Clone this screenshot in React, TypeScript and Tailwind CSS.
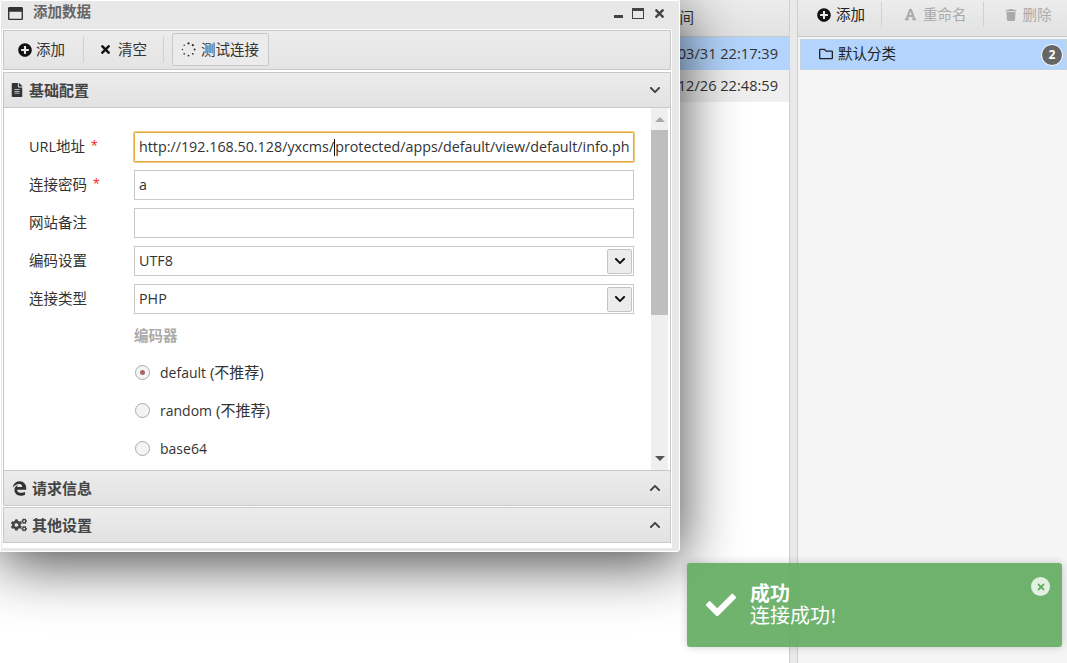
import type { ReactNode } from "react";
import { FaChevronDown, FaChevronUp, FaCogs, FaEdgeLegacy, FaFileAlt, FaFont, FaPlusCircle, FaRegFolder, FaRegWindowMaximize, FaTimes, FaTrash, FaCheck } from "react-icons/fa";

const FONT = "font-['Open_Sans','Noto_Sans_CJK_SC',sans-serif]";

const Spinner = () => (
    <svg viewBox="0 0 16 16" className="w-[15px] h-[15px] text-[#333]" fill="currentColor">
        <circle cx="8" cy="1.5" r="1.2" />
        <circle cx="12.6" cy="3.4" r="1.2" />
        <circle cx="14.5" cy="8" r="1.1" />
        <circle cx="12.6" cy="12.6" r="1" />
        <circle cx="8" cy="14.5" r="1" />
        <circle cx="3.4" cy="12.6" r="0.9" />
        <circle cx="1.5" cy="8" r="0.8" />
        <circle cx="3.4" cy="3.4" r="0.8" />
    </svg>
);

const FormRow = ({ label, required, value, focused, select }: { label: string; required?: boolean; value?: ReactNode; focused?: boolean; select?: boolean }) => (
    <div className="flex items-center h-[30px]">
        <div className="w-[105px] pb-[1px] text-[14.5px] text-[#333] flex items-center whitespace-nowrap">
            {label}
            {required && <span className="text-[#f33] ml-[6px] text-[17px] leading-none font-['Liberation_Sans']">*</span>}
        </div>
        <div
            className={`w-[500px] h-[30px] bg-white flex items-center justify-between pl-[4px] pr-[1px] text-[14.3px] text-[#333] overflow-hidden whitespace-nowrap border ${
                focused ? "border-[#e5a83b] outline outline-1 outline-[#e5a83b]/60 rounded-[1px]" : "border-[#c8c8c8]"
            }`}
        >
            <span className="flex items-center">{value}</span>
            {select && (
                <span className="w-[25px] h-[25px] bg-[#ececec] border border-[#c4c4c4] rounded-[2px] flex items-center justify-center">
                    <FaChevronDown className="text-[12px] text-[#111]" />
                </span>
            )}
        </div>
    </div>
);

const Radio = ({ label, note, checked }: { label: string; note?: string; checked?: boolean }) => (
    <div className="flex items-center gap-[10px] h-[20px] pl-[1px] text-[14px] text-[#333]">
        <span className="w-[15px] h-[15px] rounded-full border border-[#aaa] bg-[#f4f4f4] flex items-center justify-center">
            {checked && <span className="w-[5px] h-[5px] rounded-full bg-[#a56565]" />}
        </span>
        <span>
            {label}
            {note && <span className="text-[15px]"> {note}</span>}
        </span>
    </div>
);

const PanelHeader = ({ icon, title, open, gap }: { icon: ReactNode; title: string; open?: boolean; gap: string }) => (
    <div className="h-[36px] shrink-0 flex items-center justify-between pl-[6px] pr-[9px] bg-gradient-to-b from-[#ececec] to-[#e2e2e2] border border-[#c8c8c8]">
        <div className={`flex items-center text-[15px] font-bold text-[#444] ${gap}`}>
            {icon}
            {title}
        </div>
        {open ? <FaChevronDown className="text-[12px] text-[#444]" /> : <FaChevronUp className="text-[12px] text-[#444]" />}
    </div>
);

const Modal = () => (
    <div className="absolute left-0 top-0 w-[680px] h-[552px] bg-[#e8e8e8] border border-white rounded-br-[3px] shadow-[0_10px_60px_rgba(0,0,0,0.75)] flex flex-col">
        <div className="h-[29px] shrink-0 flex items-start justify-between pl-[7px] pr-[13px] relative">
            <div className="flex items-start gap-[10px] text-[14.5px] font-bold text-[#666]">
                <FaRegWindowMaximize className="text-[15px] text-[#333] mt-[5px]" />
                <span className="leading-[22px]">添加数据</span>
            </div>
            <div className="flex items-start gap-[9px] text-[#444] pt-[6px]">
                <span className="w-[9px] h-[3px] bg-[#444] mt-[8px]" />
                <span className="w-[12px] h-[11px] border border-[#444] border-t-[3px] mt-[1px]" />
                <FaTimes className="text-[13px]" />
            </div>
        </div>
        <div className="ml-[2px] mr-[8px] flex-1 flex flex-col bg-white gap-[2px] p-0 outline outline-1 outline-white">
            <div className="h-[40px] shrink-0 flex items-center px-[5px] pb-[1px] bg-gradient-to-b from-[#ececec] to-[#e4e4e4] border border-[#c8c8c8] text-[14.5px] text-[#333]">
                <div className="flex items-center gap-[4px] px-[9px] font-normal">
                    <FaPlusCircle className="text-[14px] text-[#111]" />
                    添加
                </div>
                <span className="w-px h-[25px] bg-[#d0d0d0] ml-[9px] mr-[6px]" />
                <div className="flex items-center gap-[6px] px-[9px]">
                    <FaTimes className="text-[13px] text-[#111]" />
                    清空
                </div>
                <span className="w-px h-[25px] bg-[#d0d0d0] ml-[7px] mr-[8px]" />
                <div className="h-[33px] flex items-center gap-[5px] px-[8px] bg-[#ebebeb] border border-[#c8c8c8] rounded-[2px]">
                    <Spinner />
                    <span className="pr-[1px]">测试连接</span>
                </div>
            </div>
            <div className="flex-1 flex flex-col">
                <PanelHeader icon={<FaFileAlt className="text-[14px] text-[#333]" />} title="基础配置" gap="gap-[5px]" open />
                <div className="h-[362px] shrink-0 flex border-x border-[#c8c8c8]">
                    <div className="flex-1 pt-[24px] pl-[25px] flex flex-col gap-[8px] overflow-hidden">
                        <FormRow
                            label="URL地址"
                            required
                            focused
                            value={
                                <>
                                    http://192.168.50.128/yxcms/
                                    <span className="w-px h-[17px] bg-[#111]" />
                                    protected/apps/default/view/default/info.ph
                                </>
                            }
                        />
                        <FormRow label="连接密码" required value="a" />
                        <FormRow label="网站备注" />
                        <FormRow label="编码设置" value="UTF8" select />
                        <FormRow label="连接类型" value="PHP" select />
                        <div className="pl-[105px] pt-[3px] flex flex-col gap-[18px]">
                            <div className="text-[14.5px] font-bold text-[#aaa] h-[20px] mb-[-1px]">编码器</div>
                            <Radio label="default" note="(不推荐)" checked />
                            <Radio label="random" note="(不推荐)" />
                            <Radio label="base64" />
                        </div>
                    </div>
                    <div className="w-[17px] mr-[2px] bg-[#efefef] flex flex-col items-center">
                        <span className="h-[22px] flex items-center">
                            <span className="w-0 h-0 border-x-[5px] border-x-transparent border-b-[5px] border-b-[#aaa]" />
                        </span>
                        <span className="w-full h-[185px] bg-[#bebebe]" />
                        <span className="flex-1 flex items-end pb-[9px]">
                            <span className="w-0 h-0 border-x-[5px] border-x-transparent border-t-[5px] border-t-[#555]" />
                        </span>
                    </div>
                </div>
                <PanelHeader icon={<FaEdgeLegacy className="text-[15px] text-[#333]" />} title="请求信息" gap="gap-[5px] pl-[2px]" />
                <div className="h-px shrink-0" />
                <PanelHeader icon={<FaCogs className="text-[16px] text-[#444]" />} title="其他设置" gap="gap-[5px] pl-[1px]" />
            </div>
        </div>
        <div className="h-[4px] shrink-0" />
    </div>
);

export default function App() {
    return (
        <div className={`relative h-screen w-full overflow-hidden bg-white flex ${FONT}`}>
            {/* background list */}
            <div className="w-[789px] shrink-0 flex flex-col text-[14.6px] text-[#333]">
                <div className="h-[37px] flex items-center pl-[636px] text-[14.5px] bg-gradient-to-b from-[#ececec] to-[#e2e2e2] border-b border-[#c8c8c8]">更新时间</div>
                <div className="h-[33px] flex items-center justify-end pr-[11px] bg-[#b3d4fc]">2019/03/31 22:17:39</div>
                <div className="h-[32px] flex items-center justify-end pr-[11px] bg-[#efefef]">2018/12/26 22:48:59</div>
            </div>
            <div className="w-[9px] shrink-0 bg-[#e9e9e9] border-x border-[#cfcfcf]" />

            {/* category panel */}
            <div className="flex-1 bg-[#f5f5f5] flex flex-col">
                <div className="h-[37px] shrink-0 flex items-center pl-[19px] pb-[7px] bg-gradient-to-b from-[#ececec] to-[#e2e2e2] border-b border-[#c8c8c8] text-[14.5px]">
                    <div className="flex items-center gap-[5px] text-[#222]">
                        <FaPlusCircle className="text-[14px] text-[#111]" />
                        添加
                    </div>
                    <span className="w-px h-[25px] bg-[#d0d0d0] ml-[16px] mr-[22px]" />
                    <div className="flex items-center gap-[6px] text-[#aaa]">
                        <FaFont className="text-[13px]" />
                        重命名
                    </div>
                    <span className="w-px h-[25px] bg-[#d0d0d0] ml-[16px] mr-[21px]" />
                    <div className="flex items-center gap-[6px] text-[#aaa]">
                        <FaTrash className="text-[12px]" />
                        删除
                    </div>
                </div>
                <div className="mt-[2px] h-[31px] flex items-center justify-between pl-[18px] pr-[3px] bg-[#b3d4fc] border border-[#c5d2e2] ml-[2px] text-[14.5px] text-[#222]">
                    <div className="flex items-center gap-[5px] pb-[1px]">
                        <FaRegFolder className="text-[14px]" />
                        默认分类
                    </div>
                    <span className="w-[22px] h-[22px] rounded-full bg-[#666] border border-white text-white text-[12px] font-bold flex items-center justify-center">2</span>
                </div>
            </div>

            <Modal />

            {/* toast */}
            <div className="absolute left-[687px] top-[563px] w-[375px] h-[84px] rounded-[3px] bg-[#5fab5f]/90 shadow-[0_0_8px_rgba(0,0,0,0.2)] flex items-center pl-[19px] text-white">
                <FaCheck className="text-[30px] shrink-0" />
                <div className="ml-[14px] flex flex-col font-['Liberation_Serif','Noto_Sans_CJK_SC',serif]">
                    <div className="text-[20px] font-bold leading-[22px]">成功</div>
                    <div className="text-[20px] leading-[23px]">连接成功!</div>
                </div>
                <span className="absolute right-[12px] top-[14px] w-[19px] h-[19px] rounded-full bg-white/80 flex items-center justify-center">
                    <FaTimes className="text-[10px] text-[#5fab5f]" />
                </span>
            </div>
        </div>
    );
}
